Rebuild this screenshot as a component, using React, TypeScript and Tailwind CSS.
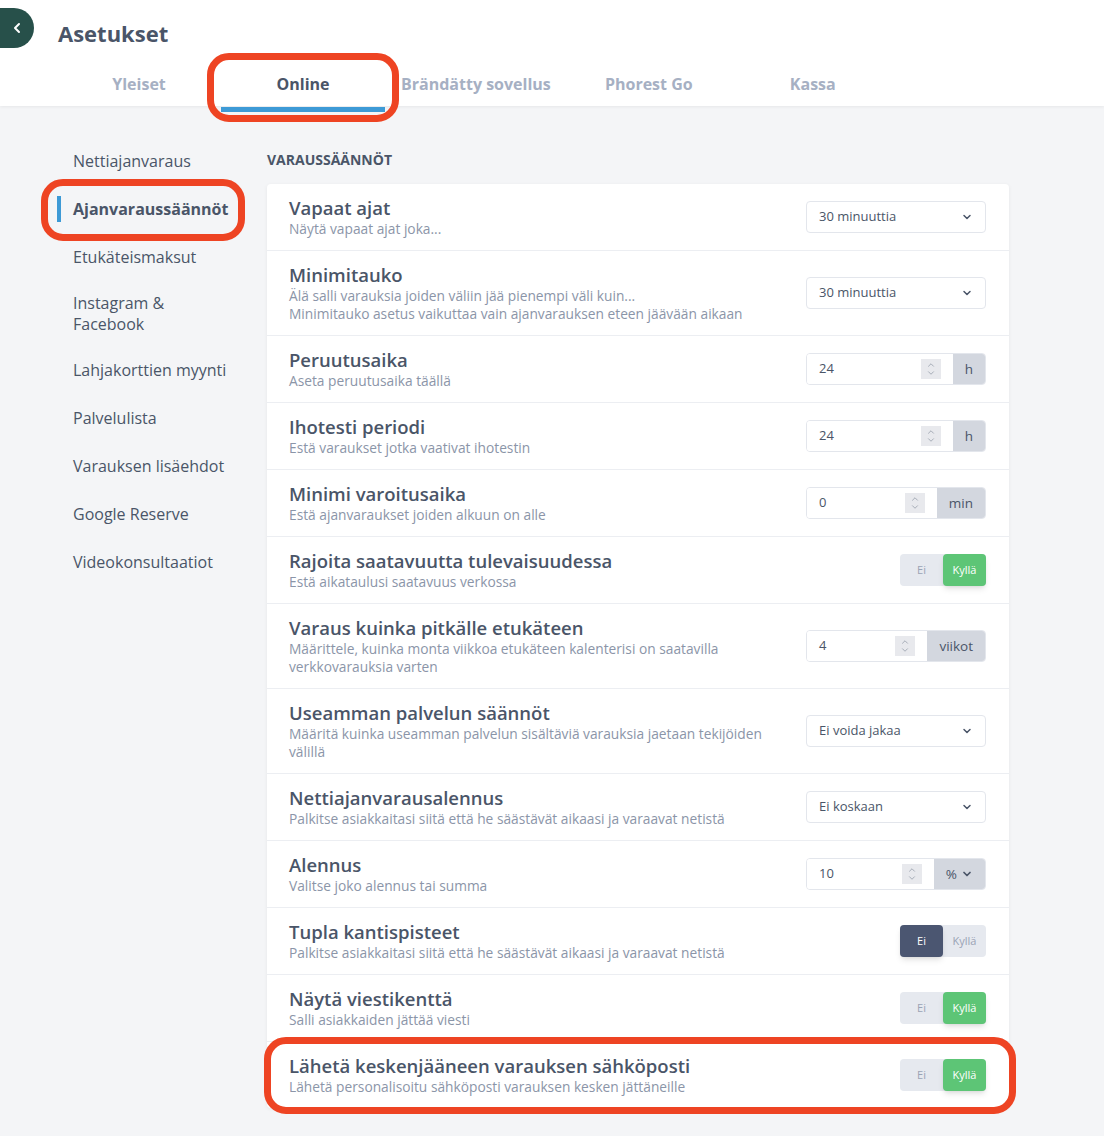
import { ChevronDown, ChevronLeft, ChevronUp } from "lucide-react";

const font = { fontFamily: '"Open Sans", "Noto Sans", sans-serif' };

type Row =
  | { title: string; desc: string[]; kind: "select"; value: string }
  | { title: string; desc: string[]; kind: "number"; value: string; unit: string; caret?: boolean }
  | { title: string; desc: string[]; kind: "toggle"; on: boolean };

const rows: Row[] = [
  { title: "Vapaat ajat", desc: ["Näytä vapaat ajat joka..."], kind: "select", value: "30 minuuttia" },
  {
    title: "Minimitauko",
    desc: [
      "Älä salli varauksia joiden väliin jää pienempi väli kuin...",
      "Minimitauko asetus vaikuttaa vain ajanvarauksen eteen jäävään aikaan",
    ],
    kind: "select",
    value: "30 minuuttia",
  },
  { title: "Peruutusaika", desc: ["Aseta peruutusaika täällä"], kind: "number", value: "24", unit: "h" },
  { title: "Ihotesti periodi", desc: ["Estä varaukset jotka vaativat ihotestin"], kind: "number", value: "24", unit: "h" },
  { title: "Minimi varoitusaika", desc: ["Estä ajanvaraukset joiden alkuun on alle"], kind: "number", value: "0", unit: "min" },
  { title: "Rajoita saatavuutta tulevaisuudessa", desc: ["Estä aikataulusi saatavuus verkossa"], kind: "toggle", on: true },
  {
    title: "Varaus kuinka pitkälle etukäteen",
    desc: ["Määrittele, kuinka monta viikkoa etukäteen kalenterisi on saatavilla", "verkkovarauksia varten"],
    kind: "number",
    value: "4",
    unit: "viikot",
  },
  {
    title: "Useamman palvelun säännöt",
    desc: ["Määritä kuinka useamman palvelun sisältäviä varauksia jaetaan tekijöiden", "välillä"],
    kind: "select",
    value: "Ei voida jakaa",
  },
  {
    title: "Nettiajanvarausalennus",
    desc: ["Palkitse asiakkaitasi siitä että he säästävät aikaasi ja varaavat netistä"],
    kind: "select",
    value: "Ei koskaan",
  },
  { title: "Alennus", desc: ["Valitse joko alennus tai summa"], kind: "number", value: "10", unit: "%", caret: true },
  {
    title: "Tupla kantispisteet",
    desc: ["Palkitse asiakkaitasi siitä että he säästävät aikaasi ja varaavat netistä"],
    kind: "toggle",
    on: false,
  },
  { title: "Näytä viestikenttä", desc: ["Salli asiakkaiden jättää viesti"], kind: "toggle", on: true },
  {
    title: "Lähetä keskenjääneen varauksen sähköposti",
    desc: ["Lähetä personalisoitu sähköposti varauksen kesken jättäneille"],
    kind: "toggle",
    on: true,
  },
];

const sideItems = [
  "Nettiajanvaraus",
  "Ajanvaraussäännöt",
  "Etukäteismaksut",
  "Instagram & Facebook",
  "Lahjakorttien myynti",
  "Palvelulista",
  "Varauksen lisäehdot",
  "Google Reserve",
  "Videokonsultaatiot",
];

function Select({ value }: { value: string }) {
  return (
    <div className="flex h-8 w-[180px] items-center justify-between rounded border border-[#e3e6ec] bg-white pl-3 pr-3 text-[13px] text-[#4a5568]">
      <span>{value}</span>
      <ChevronDown size={12} strokeWidth={3} className="text-[#4a5568]" />
    </div>
  );
}

function NumberInput({ value, unit, caret }: { value: string; unit: string; caret?: boolean }) {
  return (
    <div className="flex h-8 w-[180px] overflow-hidden rounded border border-[#e3e6ec]">
      <div className="flex flex-1 items-center bg-white pl-3 pr-3">
        <span className="flex-1 text-[13px] text-[#4a5568]">{value}</span>
        <div className="flex h-5 w-5 flex-col items-center justify-center bg-[#e8e9ed] text-[#9aa1ad]">
          <ChevronUp size={10} strokeWidth={2} className="-mb-[1px]" />
          <ChevronDown size={10} strokeWidth={2} className="-mt-[1px]" />
        </div>
      </div>
      <div className="flex items-center gap-1 bg-[#d3d7df] px-3 text-[13.5px] text-[#4a5568]">
        {unit}
        {caret && <ChevronDown size={12} strokeWidth={3.5} />}
      </div>
    </div>
  );
}

function Toggle({ on }: { on: boolean }) {
  return (
    <div className="flex h-8 w-[86px] rounded bg-[#e6e9ef] text-[11px]">
      <div
        className={
          on
            ? "flex w-1/2 items-center justify-center text-[#9aa3b5]"
            : "flex w-1/2 items-center justify-center rounded bg-[#4b5671] text-white shadow-md"
        }
      >
        Ei
      </div>
      <div
        className={
          on
            ? "flex w-1/2 items-center justify-center rounded bg-[#5dc576] text-white shadow-md"
            : "flex w-1/2 items-center justify-center text-[#9aa3b5]"
        }
      >
        Kyllä
      </div>
    </div>
  );
}

export default function App() {
  return (
    <div className="relative min-h-[1136px] bg-[#f4f5f7]" style={font}>
      <header className="relative z-10 h-[106px] bg-white shadow-[0_1px_3px_rgba(0,0,0,0.06)]">
        <div className="flex items-start pt-2">
          <div className="flex h-10 w-[34px] items-center justify-center rounded-r-[20px] bg-[#27504a] text-white">
            <ChevronLeft size={16} strokeWidth={3} />
          </div>
          <h1 className="ml-6 mt-[9px] text-[22px] font-bold leading-8 text-[#4a5568]">Asetukset</h1>
        </div>
        <nav className="ml-[57px] mt-[13px] flex text-[16px] font-bold">
          <div className="flex h-[44px] min-w-[164px] items-center justify-center px-4 text-[#a6b0c3]">Yleiset</div>
          <div className="relative flex h-[44px] min-w-[164px] items-center justify-center px-4 text-[#4a5568]">
            Online
            <div className="absolute bottom-[-6px] left-0 right-0 h-[5px] bg-[#3d9ad6]" />
          </div>
          <div className="flex h-[44px] min-w-[164px] items-center justify-center px-4 text-[#a6b0c3]">Brändätty sovellus</div>
          <div className="flex h-[44px] min-w-[164px] items-center justify-center px-4 text-[#a6b0c3]">Phorest Go</div>
          <div className="flex h-[44px] min-w-[164px] items-center justify-center px-4 text-[#a6b0c3]">Kassa</div>
        </nav>
      </header>

      <div className="flex pl-[57px]">
        <aside className="w-[210px] shrink-0 pt-[31px]">
          {sideItems.map((item) =>
            item === "Ajanvaraussäännöt" ? (
              <div key={item} className="relative flex h-12 items-center pl-4 text-[16px] font-bold text-[#4a5568]">
                <div className="absolute left-0 top-[11px] h-[26px] w-1 bg-[#3d9ad6]" />
                {item}
              </div>
            ) : item === "Instagram & Facebook" ? (
              <div key={item} className="flex h-[65px] items-center pl-4 text-[16px] leading-[21px] text-[#4a5568]">
                Instagram &amp;
                <br />
                Facebook
              </div>
            ) : (
              <div key={item} className="flex h-12 items-center pl-4 text-[16px] text-[#4a5568]">
                {item}
              </div>
            )
          )}
        </aside>

        <main className="w-[742px] pt-11">
          <h2 className="text-[14px] font-bold leading-5 text-[#4a5568]">VARAUSSÄÄNNÖT</h2>
          <div className="mt-[14px] rounded bg-white shadow-[0_1px_4px_rgba(0,0,0,0.06)]">
            {rows.map((row, i) => (
              <div
                key={row.title}
                className={
                  i === 0
                    ? "flex items-center justify-between py-3 pl-[22px] pr-[23px]"
                    : "flex items-center justify-between border-t border-[#eceef2] py-3 pl-[22px] pr-[23px]"
                }
              >
                <div>
                  <div className="text-[18.5px] font-semibold leading-6 text-[#4a5568]">{row.title}</div>
                  {row.desc.map((d) => (
                    <div key={d} className="text-[13.75px] leading-[18px] text-[#8b95a8]">
                      {d}
                    </div>
                  ))}
                </div>
                {row.kind === "select" && <Select value={row.value} />}
                {row.kind === "number" && <NumberInput value={row.value} unit={row.unit} caret={row.caret} />}
                {row.kind === "toggle" && <Toggle on={row.on} />}
              </div>
            ))}
          </div>
        </main>
      </div>

      {/* annotation highlights */}
      <div className="pointer-events-none absolute left-[207px] top-[53px] z-20 h-[69px] w-[192px] rounded-[22px] border-[7px] border-[#ee4423]" />
      <div className="pointer-events-none absolute left-[41px] top-[179px] z-20 h-[62px] w-[204px] rounded-[22px] border-[7px] border-[#ee4423]" />
      <div className="pointer-events-none absolute left-[264px] top-[1037px] z-20 h-[77px] w-[752px] rounded-[22px] border-[7px] border-[#ee4423]" />
    </div>
  );
}
